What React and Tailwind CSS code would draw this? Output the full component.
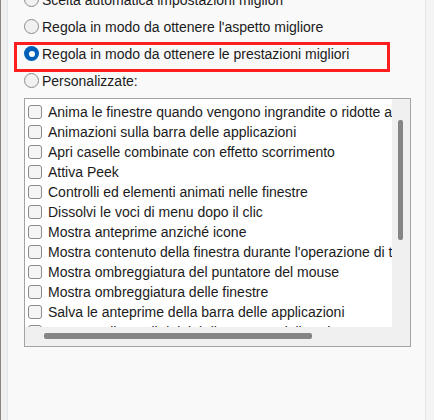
export default function App() {
  const items = [
    "Anima le finestre quando vengono ingrandite o ridotte a icona",
    "Animazioni sulla barra delle applicazioni",
    "Apri caselle combinate con effetto scorrimento",
    "Attiva Peek",
    "Controlli ed elementi animati nelle finestre",
    "Dissolvi le voci di menu dopo il clic",
    "Mostra anteprime anziché icone",
    "Mostra contenuto della finestra durante l'operazione di trascinamento",
    "Mostra ombreggiatura del puntatore del mouse",
    "Mostra ombreggiatura delle finestre",
    "Salva le anteprime della barra delle applicazioni",
    "Smussa gli angoli dei tipi di carattere dello schermo",
  ];

  const Radio = ({ checked }) =>
    checked ? (
      <span className="flex h-[15px] w-[15px] shrink-0 items-center justify-center rounded-full bg-[#0060b9]">
        <span className="h-[6px] w-[6px] rounded-full bg-white" />
      </span>
    ) : (
      <span className="h-[15px] w-[15px] shrink-0 rounded-full border border-[#8b8b8b] bg-[#f1f1f1]" />
    );

  const radios = [
    { label: "Scelta automatica impostazioni migliori" },
    { label: "Regola in modo da ottenere l'aspetto migliore" },
    { label: "Regola in modo da ottenere le prestazioni migliori", checked: true, boxed: true },
    { label: "Personalizzate:" },
  ];

  return (
    <div className="flex h-[420px] w-[434px] overflow-hidden bg-[#f9f9f9] font-['Liberation_Sans',Arial,sans-serif] text-[14px] text-[#1b1b1b]">
      <div className="w-[1px] shrink-0 bg-[#8d8580]" />
      <div className="w-[6px] shrink-0 bg-[#efefef]" />
      <div className="w-[1px] shrink-0 bg-[#e4e4e4]" />
      <div className="flex w-[417px] shrink-0 flex-col pl-[16px]">
        <div className="-mt-[14px] flex flex-col">
          {radios.map((r) => (
            <div key={r.label} className="relative flex h-[27px] items-center gap-[3px] whitespace-nowrap">
              <Radio checked={r.checked} />
              <span className="leading-none">{r.label}</span>
              {r.boxed && (
                <div className="pointer-events-none absolute left-[-10px] top-[2px] h-[30px] w-[376px] border-[3px] border-[#ff1e1e]" />
              )}
            </div>
          ))}
        </div>
        <div className="mt-[4px] grid h-[249px] w-[387px] grid-cols-[367px_18px] grid-rows-[228px_19px] border border-[#a3a3a3] bg-white">
          <div className="flex flex-col overflow-hidden pt-[3px]">
            {items.map((t) => (
              <div key={t} className="flex h-[20px] shrink-0 items-center gap-[6px] whitespace-nowrap pl-[3px]">
                <span className="h-[14px] w-[14px] shrink-0 rounded-[3px] border border-[#8b8b8b] bg-[#f5f5f5]" />
                <span className="leading-none">{t}</span>
              </div>
            ))}
          </div>
          <div className="bg-[#f0f0f0] pt-[21px]">
            <div className="ml-[6px] h-[120px] w-[5px] rounded-[2px] bg-[#858585]" />
          </div>
          <div className="bg-[#f0f0f0] pt-[6px]">
            <div className="ml-[19px] h-[6px] w-[268px] rounded-[2px] bg-[#858585]" />
          </div>
          <div className="bg-[#f0f0f0]" />
        </div>
      </div>
      <div className="w-[1px] shrink-0 bg-[#e6e6e6]" />
      <div className="flex-1 bg-[#f4f4f4]" />
    </div>
  );
}
